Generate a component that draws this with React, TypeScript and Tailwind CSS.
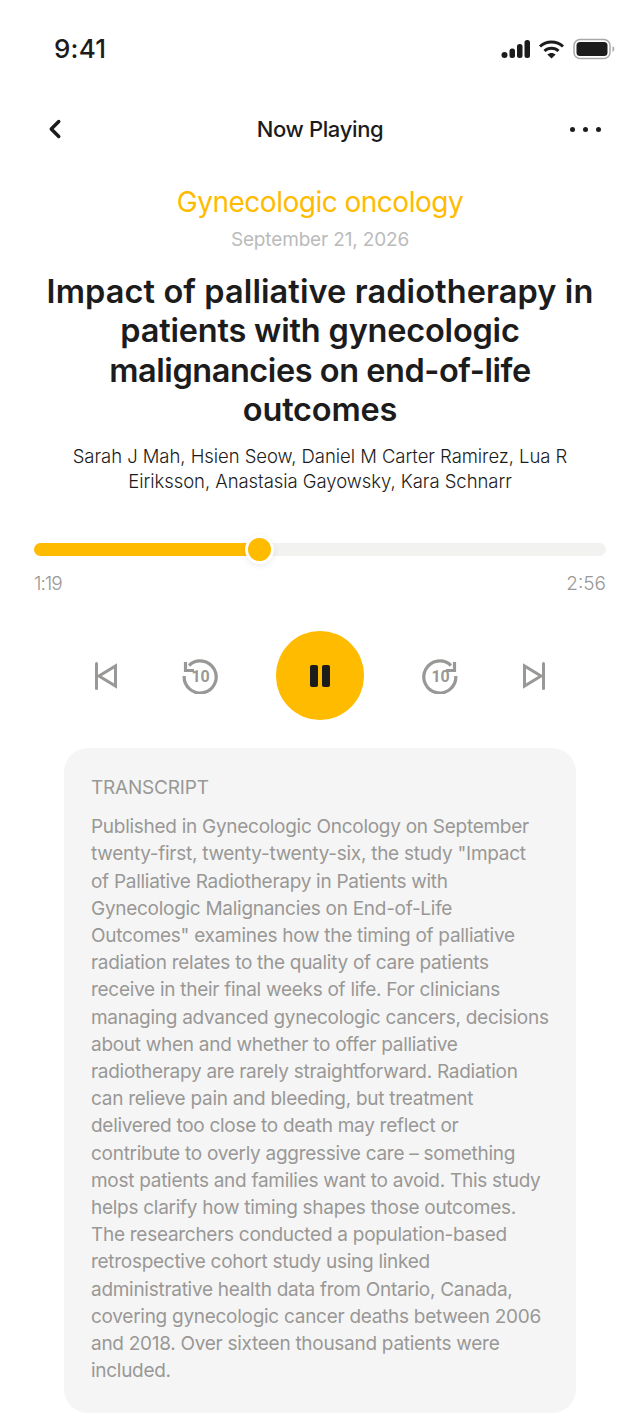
import {ChevronLeft} from "lucide-react";

const transcriptLines = [
    "Published in Gynecologic Oncology on September",
    "twenty-first, twenty-twenty-six, the study \"Impact",
    "of Palliative Radiotherapy in Patients with",
    "Gynecologic Malignancies on End-of-Life",
    "Outcomes\" examines how the timing of palliative",
    "radiation relates to the quality of care patients",
    "receive in their final weeks of life. For clinicians",
    "managing advanced gynecologic cancers, decisions",
    "about when and whether to offer palliative",
    "radiotherapy are rarely straightforward. Radiation",
    "can relieve pain and bleeding, but treatment",
    "delivered too close to death may reflect or",
    "contribute to overly aggressive care – something",
    "most patients and families want to avoid. This study",
    "helps clarify how timing shapes those outcomes.",
    "The researchers conducted a population-based",
    "retrospective cohort study using linked",
    "administrative health data from Ontario, Canada,",
    "covering gynecologic cancer deaths between 2006",
    "and 2018. Over sixteen thousand patients were",
    "included.",
];

function StatusIcons() {
    return (
        <div className="flex items-center gap-[7px]">
            <svg width="30" height="20" viewBox="0 0 30 20" fill="#1c1c1c">
                <rect x="0.5" y="13" width="6" height="6" rx="3" />
                <rect x="8.5" y="9.5" width="5.5" height="9.5" rx="2.5" />
                <rect x="16" y="5" width="5.5" height="14" rx="2.5" />
                <rect x="23.5" y="1" width="5.5" height="18" rx="2.5" />
            </svg>
            <svg width="27" height="20" viewBox="0 0 26 20" fill="none" stroke="#1c1c1c" strokeWidth="3" strokeLinecap="butt">
                <path d="M1.5 7.5C7.8 1.4 18.2 1.4 24.5 7.5" />
                <path d="M6 12C9.8 8.4 16.2 8.4 20 12" />
                <path d="M13 19.5L8.8 15.6C11.2 13.4 14.8 13.4 17.2 15.6Z" fill="#1c1c1c" stroke="none" />
            </svg>
            <svg width="42" height="22" viewBox="0 0 42 22" className="ml-[1px]">
                <rect x="1" y="1.5" width="36" height="19" rx="6" fill="none" stroke="#a8a8a8" strokeWidth="1.5" />
                <rect x="3.5" y="4" width="31" height="14" rx="3.5" fill="#1c1c1c" />
                <path d="M39.5 8V14C40.6 13.5 41.3 12.4 41.3 11C41.3 9.6 40.6 8.5 39.5 8Z" fill="#a8a8a8" />
            </svg>
        </div>
    );
}

function SkipBack({flip}: {flip?: boolean}) {
    return (
        <svg width="24" height="28" viewBox="0 0 24 28" fill="none" stroke="#999896" strokeWidth="3" className={flip ? "-scale-x-100" : ""}>
            <path d="M2.5 1.5V26.5" strokeLinecap="round" />
            <path d="M21.5 4V24L5 14Z" strokeLinejoin="miter" />
        </svg>
    );
}

function Replay({forward}: {forward?: boolean}) {
    return (
        <div className="relative w-[36px] h-[36px]">
            <svg width="36" height="36" viewBox="0 0 36 36" fill="none" stroke="#999896" strokeWidth="3.2" className={forward ? "-scale-x-100" : ""}>
                <path d="M7 7.5A16 16 0 1 1 2.2 18" />
                <path d="M3.5 4V12.5H12" />
            </svg>
            <span className="absolute inset-0 pt-[2px] pl-[1px] flex items-center justify-center font-['Roboto',sans-serif] text-[16px] font-bold tracking-[-0.3px] text-[#999896] leading-none">10</span>
        </div>
    );
}

export default function App() {
    return (
        <div className="w-[640px] h-[1413px] overflow-hidden bg-white font-['Inter',sans-serif] text-[#1c1c1c]">
            <div className="flex items-center justify-between pl-[54px] pr-[25px] pt-[32px] h-[66px]">
                <span className="text-[26px] font-medium leading-[34px] tracking-[0.2px]">9:41</span>
                <StatusIcons />
            </div>

            <div className="flex items-center justify-between pl-[40px] pr-[40px] mt-[41px] h-[44px]">
                <ChevronLeft size={30} strokeWidth={2.8} />
                <span className="text-[22px] font-medium leading-[30px] tracking-[-0.35px]">Now Playing</span>
                <div className="flex gap-[8px] w-[30px]">
                    <div className="w-[5px] h-[5px] shrink-0 rounded-full bg-[#1c1c1c]" />
                    <div className="w-[5px] h-[5px] shrink-0 rounded-full bg-[#1c1c1c]" />
                    <div className="w-[5px] h-[5px] shrink-0 rounded-full bg-[#1c1c1c]" />
                </div>
            </div>

            <div className="mt-[33px] text-center">
                <div className="text-[28px] leading-[36px] text-[#ffbb00] tracking-[-0.5px]">Gynecologic oncology</div>
                <div className="mt-[7px] text-[19px] leading-[26px] text-[#bbbbbb] tracking-[-0.15px]">September 21, 2026</div>
                <div className="mt-[19px] text-[32.5px] leading-[39.3px] font-semibold tracking-[-0.2px]">
                    <div className="tracking-[0.1px]">Impact of palliative radiotherapy in</div>
                    <div>patients with gynecologic</div>
                    <div className="tracking-[-0.45px]">malignancies on end-of-life</div>
                    <div>outcomes</div>
                </div>
                <div className="mt-[15px] text-[18.5px] leading-[25px] font-light tracking-[-0.05px]">
                    <div>Sarah J Mah, Hsien Seow, Daniel M Carter Ramirez, Lua R</div>
                    <div>Eiriksson, Anastasia Gayowsky, Kara Schnarr</div>
                </div>
            </div>

            <div className="mx-[34px] mt-[49px]">
                <div className="relative h-[13px] rounded-full bg-[#f2f2f0]">
                    <div className="h-full w-[226px] rounded-full bg-[#ffbb00]" />
                    <div className="absolute left-[211px] top-[-8px] w-[29px] h-[29px] rounded-full bg-[#ffbb00] border-[3px] border-white shadow-[0_2px_6px_rgba(0,0,0,0.08)]" />
                </div>
                <div className="flex justify-between mt-[15px] text-[19px] leading-[26px] font-light text-[#999896]">
                    <span className="tracking-[-1px]">1:19</span>
                    <span>2:56</span>
                </div>
            </div>

            <div className="flex items-center justify-center mt-[34px] h-[89px]">
                <SkipBack />
                <div className="ml-[64px]"><Replay /></div>
                <div className="mx-[58px] w-[88px] h-[89px] rounded-full bg-[#ffbb00] flex items-center justify-center gap-[4px]">
                    <div className="w-[8px] h-[22px] rounded-[2px] bg-[#1c1c1c]" />
                    <div className="w-[8px] h-[22px] rounded-[2px] bg-[#1c1c1c]" />
                </div>
                <div className="mr-[64px]"><Replay forward /></div>
                <SkipBack flip />
            </div>

            <div className="mx-[64px] mt-[28px] h-[665px] rounded-[24px] bg-[#f5f5f5] pl-[27px] pt-[27px] text-[#999896]">
                <div className="text-[19px] leading-[26px] tracking-[-0.2px]">TRANSCRIPT</div>
                <div className="mt-[12px] text-[19px] leading-[27.2px] tracking-[-0.28px] whitespace-nowrap">
                    {transcriptLines.map(line => <div key={line}>{line}</div>)}
                </div>
            </div>
        </div>
    );
}
